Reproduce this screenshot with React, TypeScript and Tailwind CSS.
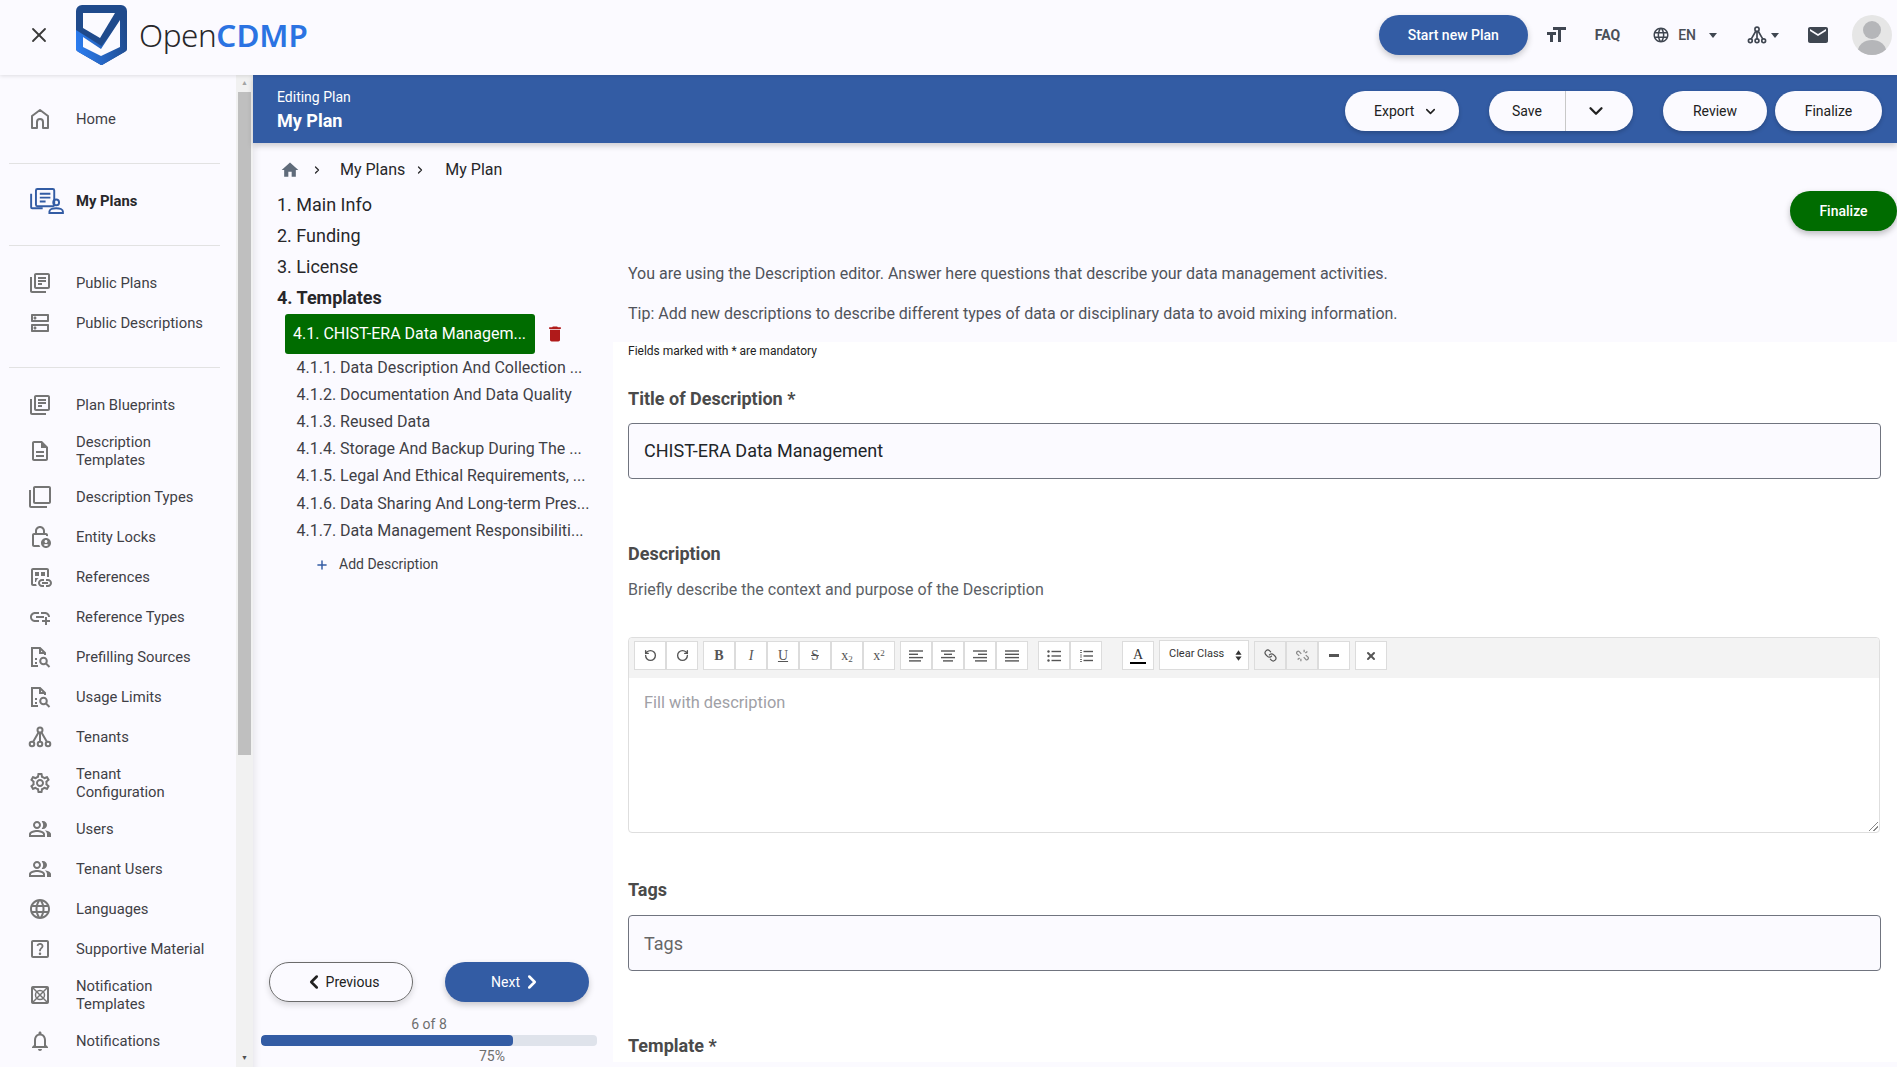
import { ChevronDown, ChevronLeft, ChevronRight, Link, Plus, RotateCcw, RotateCw, X } from 'lucide-react'
import {
  MdDelete,
  MdEmail,
  MdFormatSize,
  MdHome,
  MdLanguage,
  MdOutlineAddLink,
  MdOutlineDatasetLinked,
  MdOutlineDescription,
  MdOutlineDns,
  MdOutlineFilterNone,
  MdOutlineHelpCenter,
  MdOutlineLanguage,
  MdOutlineLibraryBooks,
  MdOutlineLockPerson,
  MdOutlineNotifications,
  MdOutlinePeopleAlt,
  MdOutlineSettings,
} from 'react-icons/md'
import type { ReactNode } from 'react'

const icon = 'w-[24px] h-[24px] text-[#757575] shrink-0'

function TenantsIcon({ className }: { className: string }) {
  return (
    <svg viewBox="0 0 24 24" className={className} fill="none" stroke="currentColor" strokeWidth="2">
      <circle cx="12" cy="5" r="2.500" />
      <circle cx="4" cy="19" r="2.300" />
      <circle cx="12" cy="19" r="2.300" />
      <circle cx="20" cy="19" r="2.300" />
      <path d="M12 8v9M10.500 7.500 5 17M13.500 7.500 19 17" />
    </svg>
  )
}

function DocSearch() {
  return (
    <svg viewBox="0 0 24 24" className={icon} fill="none" stroke="currentColor" strokeWidth="2">
      <path d="M10 21H4V3h8l5 5v2" />
      <path d="M12 3v5h5M7 14h2M7 18h2" />
      <circle cx="15.500" cy="16" r="3.300" />
      <path d="m18 18.500 3.500 3.500" />
    </svg>
  )
}

type NavItem = { label: ReactNode; icon: ReactNode; tall?: boolean }

const adminItems: NavItem[] = [
  { label: 'Plan Blueprints', icon: <MdOutlineLibraryBooks className={icon} /> },
  { label: <>Description<br />Templates</>, tall: true, icon: <MdOutlineDescription className={icon} /> },
  { label: 'Description Types', icon: <MdOutlineFilterNone className={icon} /> },
  { label: 'Entity Locks', icon: <MdOutlineLockPerson className={icon} /> },
  { label: 'References', icon: <MdOutlineDatasetLinked className={icon} /> },
  { label: 'Reference Types', icon: <MdOutlineAddLink className={icon} /> },
  { label: 'Prefilling Sources', icon: <DocSearch /> },
  { label: 'Usage Limits', icon: <DocSearch /> },
  { label: 'Tenants', icon: <TenantsIcon className={icon} /> },
  { label: <>Tenant<br />Configuration</>, tall: true, icon: <MdOutlineSettings className={icon} /> },
  { label: 'Users', icon: <MdOutlinePeopleAlt className={icon} /> },
  { label: 'Tenant Users', icon: <MdOutlinePeopleAlt className={icon} /> },
  { label: 'Languages', icon: <MdOutlineLanguage className={icon} /> },
  { label: 'Supportive Material', icon: <MdOutlineHelpCenter className={icon} /> },
  {
    label: <>Notification<br />Templates</>,
    tall: true,
    icon: (
      <svg viewBox="0 0 24 24" className={icon} fill="none" stroke="currentColor" strokeWidth="2">
        <rect x="4" y="4" width="16" height="16" rx="1" />
        <circle cx="12" cy="12" r="4.500" strokeWidth="1.500" />
        <path d="m4 4 16 16M20 4 4 20" strokeWidth="1.500" />
      </svg>
    ),
  },
  { label: 'Notifications', icon: <MdOutlineNotifications className={icon} /> },
]

function NavRow({ item }: { item: NavItem }) {
  return (
    <div className={`flex items-center pl-[28px] ${item.tall ? 'h-[52px]' : 'h-[40px]'}`}>
      {item.icon}
      <span className="ml-[24px] text-[14.800px] leading-[18px] text-[#3f3f46]">{item.label}</span>
    </div>
  )
}

function Divider() {
  return <div className="h-px bg-[#e2e2e2] ml-[9px] mr-[16px]" />
}

function Sidebar() {
  return (
    <aside className="w-[253px] shrink-0 flex h-[992px] overflow-hidden">
      <div className="w-[236px] shrink-0">
        <div className="h-[88px] flex items-center pl-[28px]">
          <svg viewBox="0 0 24 24" className={icon} fill="none" stroke="currentColor" strokeWidth="2" strokeLinejoin="round">
            <path d="M12 3 4 9v12h5v-6a3 3 0 0 1 6 0v6h5V9z" />
          </svg>
          <span className="ml-[24px] text-[14.800px] text-[#3f3f46]">Home</span>
        </div>
        <Divider />
        <div className="h-[81px] pb-[7px] flex items-center pl-[30px]">
          <svg viewBox="0 0 36 27" className="w-[35px] h-[26px] text-[#335ca4] shrink-0" fill="none" stroke="currentColor" strokeWidth="2">
            <rect x="6" y="1" width="19" height="18" rx="1.500" />
            <path d="M1 6v14a1 1 0 0 0 1 1h11M10 6h11M10 10h11M10 14h6" />
            <circle cx="27" cy="15" r="3" />
            <path d="M20 26v-1.500c0-2 3-3.500 7-3.500s7 1.500 7 3.500V26Z" />
          </svg>
          <span className="ml-[11px] text-[14.800px] font-bold text-[#27272a]">My Plans</span>
        </div>
        <Divider />
        <div className="h-[121px] pt-[17px]">
          <NavRow item={{ label: 'Public Plans', icon: <MdOutlineLibraryBooks className={icon} /> }} />
          <NavRow item={{ label: 'Public Descriptions', icon: <MdOutlineDns className={icon} /> }} />
        </div>
        <Divider />
        <div className="pt-[17px]">
          {adminItems.map((item, i) => (
            <NavRow key={i} item={item} />
          ))}
        </div>
      </div>
      <div className="w-[17px] bg-[#f1f1f1] flex flex-col items-center relative">
        <div className="text-[#a3a3a3] text-[7px] leading-[17px] h-[17px]">▲</div>
        <div className="w-[13px] h-[663px] bg-[#bfbfbf]" />
        <div className="absolute bottom-0 text-[#505050] text-[7px] leading-[17px]">▼</div>
      </div>
    </aside>
  )
}

function Logo() {
  return (
    <svg viewBox="0 0 51 60" className="w-[51px] h-[60px] ml-[30px] shrink-0">
      <defs>
        <linearGradient id="lg" x1="0" y1="0.6" x2="1" y2="0.4">
          <stop offset="0" stopColor="#2b7cf0" />
          <stop offset="1" stopColor="#1f4a8c" />
        </linearGradient>
      </defs>
      <path d="M6 0h39a6 6 0 0 1 6 6v37a4 4 0 0 1-2.500 4L26 60a2 2 0 0 1-1 0L2.500 47A4 4 0 0 1 0 43V6a6 6 0 0 1 6-6Z" fill="#1f4a8c" />
      <path d="M0 25 25.500 41 51 8v35a4 4 0 0 1-2.500 4L26 60a2 2 0 0 1-1 0L2.500 47A4 4 0 0 1 0 43Z" fill="url(#lg)" />
      <path d="M7 8h32L24 33 7 23Z" fill="#fbfaff" />
      <path d="M7 32 25 44 44 15v27L25 51 7 42Z" fill="#fbfaff" />
    </svg>
  )
}

function Caret({ className }: { className: string }) {
  return <span className={`w-0 h-0 border-x-[4px] border-x-transparent border-t-[5px] border-t-[#3f4651] ${className}`} />
}

function Header() {
  return (
    <header className="h-[75px] pb-[5px] flex items-center shadow-[0_1px_4px_rgba(0,0,0,0.12)] relative z-10 bg-[#fbfaff]">
      <X className="w-[24px] h-[24px] ml-[27px] text-[#3a3a3a] shrink-0" strokeWidth={1.800} />
      <div className="ml-[-5px] flex items-center">
        <Logo />
        <span className="ml-[12px] text-[31.400px] font-['Noto_Sans',sans-serif] text-[#27272a] font-light tracking-[-0.400px]">
          Open<span className="text-[#2b73e2] font-semibold tracking-[0px]">CDMP</span>
        </span>
      </div>
      <div className="ml-auto flex items-center">
        <button className="w-[149px] h-[40px] rounded-full bg-[#335ca4] text-white text-[14px] font-medium shadow-[0_3px_6px_rgba(0,0,0,0.2)]">Start new Plan</button>
        <MdFormatSize className="ml-[16px] w-[24px] h-[24px] text-[#3f4651]" />
        <span className="ml-[27px] text-[14px] font-bold text-[#4a4f57]">FAQ</span>
        <MdLanguage className="ml-[32px] w-[18px] h-[18px] text-[#3f4651]" />
        <span className="ml-[8px] text-[14px] font-medium text-[#4a4f57]">EN</span>
        <Caret className="ml-[13px]" />
        <TenantsIcon className="ml-[30px] w-[20px] h-[20px] text-[#3f4651]" />
        <Caret className="ml-[4px]" />
        <MdEmail className="ml-[27px] w-[24px] h-[24px] text-[#3f4651]" />
        <svg viewBox="0 0 40 40" className="ml-[22px] mr-[5px] w-[40px] h-[40px]">
          <defs><clipPath id="av"><circle cx="20" cy="20" r="20" /></clipPath></defs>
          <g clipPath="url(#av)">
            <rect width="40" height="40" fill="#e6e6e6" />
            <circle cx="20" cy="15" r="9" fill="#b5b6b9" />
            <ellipse cx="20" cy="36" rx="14" ry="11" fill="#b5b6b9" />
          </g>
        </svg>
      </div>
    </header>
  )
}

function PillButton({ children, className }: { children: ReactNode; className: string }) {
  return (
    <button className={`h-[40px] rounded-full bg-[#fbfaff] text-[14px] text-[#212121] flex items-center shadow-[0_2px_4px_rgba(0,0,0,0.2)] ${className}`}>
      {children}
    </button>
  )
}

function TitleBar() {
  return (
    <div className="h-[68px] pt-[4px] bg-[#335ca4] flex items-center pl-[24px] shadow-[0_3px_6px_rgba(0,0,0,0.18)] relative z-[5]">
      <div className="pt-[2px]">
        <div className="text-[14px] leading-[18px] text-white">Editing Plan</div>
        <div className="text-[18px] leading-[30px] font-bold text-white">My Plan</div>
      </div>
      <div className="ml-auto flex items-center mr-[15px]">
        <PillButton className="w-[114px] pl-[29px] gap-[9px]">Export <ChevronDown className="w-[15px] h-[15px]" strokeWidth={2.500} /></PillButton>
        <PillButton className="ml-[30px] w-[144px]">
          <span className="w-[77px] text-center border-r border-[#c8c8c8] leading-[40px]">Save</span>
          <ChevronDown className="ml-[19px] w-[22px] h-[22px]" strokeWidth={2.500} />
        </PillButton>
        <PillButton className="ml-[30px] w-[104px] justify-center">Review</PillButton>
        <PillButton className="ml-[8px] w-[107px] justify-center">Finalize</PillButton>
      </div>
    </div>
  )
}

const sections = [
  '4.1.1. Data Description And Collection ...',
  '4.1.2. Documentation And Data Quality',
  '4.1.3. Reused Data',
  '4.1.4. Storage And Backup During The ...',
  '4.1.5. Legal And Ethical Requirements, ...',
  '4.1.6. Data Sharing And Long-term Pres...',
  '4.1.7. Data Management Responsibiliti...',
]

function Steps() {
  return (
    <div className="w-[360px] shrink-0 h-[924px] flex flex-col shadow-[inset_10px_0_10px_-10px_rgba(0,0,0,0.12)]">
      <div className="flex items-center h-[46px] pl-[27px] pt-[8px] text-[16px] text-[#27272a]">
        <MdHome className="w-[20px] h-[20px] text-[#5f6b7a]" />
        <ChevronRight className="ml-[11px] w-[12px] h-[12px]" strokeWidth={2.500} />
        <span className="ml-[17px]">My Plans</span>
        <ChevronRight className="ml-[9px] w-[12px] h-[12px]" strokeWidth={2.500} />
        <span className="ml-[19px]">My Plan</span>
      </div>
      <div className="pl-[24px] text-[18px] leading-[31px] text-[#27272a]">
        <div>1. Main Info</div>
        <div>2. Funding</div>
        <div>3. License</div>
        <div className="font-bold">4. Templates</div>
      </div>
      <div className="flex items-center mt-[0.500px] pl-[32px]">
        <div className="w-[250px] h-[40px] rounded-[3px] bg-[#006c00] text-white text-[16px] flex items-center pl-[8px]">4.1. CHIST-ERA Data Managem...</div>
        <MdDelete className="ml-[10px] w-[20px] h-[20px] text-[#b01a1a]" />
      </div>
      <div className="pl-[43.500px] text-[16px] leading-[27.200px] text-[#3f3f46] whitespace-nowrap">
        {sections.map(s => (
          <div key={s}>{s}</div>
        ))}
      </div>
      <div className="flex items-center pl-[62px] mt-[12px] h-[18px] text-[14px] text-[#3f3f46]">
        <Plus className="w-[14px] h-[14px] text-[#335ca4]" strokeWidth={2.500} />
        <span className="ml-[10px]">Add Description</span>
      </div>
      <div className="mt-auto pl-[8px] pr-[16px] pb-[2px]">
        <div className="flex pl-[8px]">
          <button className="w-[144px] h-[40px] rounded-full border border-[#6b6b6b] text-[14px] text-[#212121] flex items-center justify-center gap-[1px] shadow-[0_3px_6px_rgba(0,0,0,0.14)]">
            <ChevronLeft className="w-[22px] h-[22px]" strokeWidth={2.800} /> Previous
          </button>
          <button className="ml-[32px] w-[144px] h-[40px] rounded-full bg-[#335ca4] text-[14px] text-white flex items-center justify-center gap-[1px] shadow-[0_3px_6px_rgba(0,0,0,0.2)]">
            Next <ChevronRight className="w-[22px] h-[22px]" strokeWidth={2.800} />
          </button>
        </div>
        <div className="text-center text-[14px] leading-[18px] text-[#6e6e6e] mt-[13px]">6 of 8</div>
        <div className="h-[11px] rounded-[4px] bg-[#dfe3eb] mt-[2px] overflow-hidden">
          <div className="h-full w-[75%] bg-[#335ca4] rounded-[4px]" />
        </div>
        <div className="text-[14px] leading-[18px] text-[#6e6e6e] pl-[218px] mt-[1px]">75%</div>
      </div>
    </div>
  )
}

function ToolBtn({ children, shaded }: { children: ReactNode; shaded?: boolean }) {
  return (
    <div className={`w-[32px] h-[29px] border border-[#dcdcdc] flex items-center justify-center text-[14px] text-[#555] font-['Liberation_Serif',serif] ${shaded ? 'bg-[#f2f2f2]' : 'bg-white'}`}>
      {children}
    </div>
  )
}

function LinesIcon({ rows }: { rows: [number, number][] }) {
  return (
    <svg viewBox="0 0 14 12" className="w-[14px] h-[12px] text-[#555]" stroke="currentColor" strokeWidth="1.400">
      {rows.map(([from, to], i) => (
        <path key={i} d={`M${from} ${1 + i * 3.300}H${to}`} />
      ))}
    </svg>
  )
}

function ListIcon({ ordered }: { ordered?: boolean }) {
  return (
    <svg viewBox="0 0 14 12" className="w-[14px] h-[12px] text-[#555]" stroke="currentColor" strokeWidth="1.400">
      {[1.500, 6, 10.500].map(y => (
        <g key={y}>
          {ordered ? <path d={`M1 ${y - 1}h2M1 ${y + 1}h2`} strokeWidth="0.800" /> : <circle cx="1.500" cy={y} r="1.200" fill="currentColor" stroke="none" />}
          <path d={`M4.500 ${y}H14`} />
        </g>
      ))}
    </svg>
  )
}

function Toolbar() {
  return (
    <div className="h-[40px] bg-[#f3f3f3] rounded-t-[4px] flex items-start pl-[5px] pt-[3px]">
      <div className="flex">
        <ToolBtn><RotateCcw className="w-[13px] h-[13px]" strokeWidth={2.500} /></ToolBtn>
        <ToolBtn><RotateCw className="w-[13px] h-[13px]" strokeWidth={2.500} /></ToolBtn>
      </div>
      <div className="flex ml-[5px]">
        <ToolBtn><span className="font-bold">B</span></ToolBtn>
        <ToolBtn><span className="italic">I</span></ToolBtn>
        <ToolBtn><span className="underline">U</span></ToolBtn>
        <ToolBtn><span className="line-through">S</span></ToolBtn>
        <ToolBtn><span>x<sub className="text-[9px]">2</sub></span></ToolBtn>
        <ToolBtn><span>x<sup className="text-[9px]">2</sup></span></ToolBtn>
      </div>
      <div className="flex ml-[5px]">
        <ToolBtn><LinesIcon rows={[[0, 14], [0, 9], [0, 14], [0, 12]]} /></ToolBtn>
        <ToolBtn><LinesIcon rows={[[0, 14], [3, 11], [0, 14], [2, 12]]} /></ToolBtn>
        <ToolBtn><LinesIcon rows={[[0, 14], [5, 14], [0, 14], [2, 14]]} /></ToolBtn>
        <ToolBtn><LinesIcon rows={[[0, 14], [0, 14], [0, 14], [0, 14]]} /></ToolBtn>
      </div>
      <div className="flex ml-[10px]">
        <ToolBtn><ListIcon /></ToolBtn>
        <ToolBtn><ListIcon ordered /></ToolBtn>
      </div>
      <div className="flex ml-[20px]">
        <ToolBtn><span className="border-b-2 border-black leading-[15px] px-[3px] text-[#333]">A</span></ToolBtn>
      </div>
      <div className="ml-[5px] -mt-[1px] w-[90px] h-[30px] bg-white border border-[#dcdcdc] text-[11px] text-[#333] flex items-center pl-[9px] pb-[2px]">
        Clear Class
        <svg viewBox="0 0 8 14" className="ml-auto mr-[6px] mt-[2px] w-[7px] h-[13px]" fill="#333">
          <path d="M4 1 7.500 6H.5ZM4 13 .5 8h7Z" />
        </svg>
      </div>
      <div className="flex ml-[5px]">
        <ToolBtn shaded><Link className="w-[13px] h-[13px] -scale-x-100" strokeWidth={2.200} /></ToolBtn>
        <ToolBtn shaded>
          <svg viewBox="0 0 16 16" className="w-[13px] h-[13px] text-[#888]" fill="none" stroke="currentColor" strokeWidth="1.500">
            <path d="M6.500 6 4 3.200a2 2 0 0 0-2.800 2.800L4 8.500M9.500 10l2.500 2.800a2 2 0 0 0 2.800-2.800L12 7.500M10 1v3M14 3l-2.500 2M2 13l2.500-2M6 15v-3" />
          </svg>
        </ToolBtn>
        <ToolBtn><span className="w-[10px] h-[2.500px] bg-[#555]" /></ToolBtn>
      </div>
      <div className="flex ml-[5px]">
        <ToolBtn><X className="w-[12px] h-[12px]" strokeWidth={4} /></ToolBtn>
      </div>
    </div>
  )
}

const label = 'text-[18px] leading-[24px] font-bold text-[#4a4a4a]'
const field = 'h-[56px] border border-[#70747f] rounded-[4px] bg-[#fbfaff] flex items-center pl-[15px] text-[18px]'

function Editor() {
  return (
    <div className="flex-1 min-w-0 h-[924px] overflow-hidden">
      <div className="h-[199px] pl-[15px]">
        <div className="flex justify-end pt-[48px]">
          <button className="w-[107px] h-[40px] rounded-full bg-[#006c00] text-white text-[14px] font-medium shadow-[0_3px_6px_rgba(0,0,0,0.25)]">Finalize</button>
        </div>
        <p className="mt-[31px] text-[16px] leading-[24px] text-[#50535a]">You are using the Description editor. Answer here questions that describe your data management activities.</p>
        <p className="mt-[16px] text-[16px] leading-[24px] text-[#50535a]">Tip: Add new descriptions to describe different types of data or disciplinary data to avoid mixing information.</p>
      </div>
      <div className="bg-white h-[720px] pl-[15px] pr-[16px]">
        <p className="text-[12px] leading-[18px] text-[#222]">Fields marked with * are mandatory</p>
        <h2 className={`mt-[27px] ${label}`}>Title of Description *</h2>
        <div className={`mt-[12px] pb-[2px] text-[#212529] ${field}`}>CHIST-ERA Data Management</div>
        <h2 className={`mt-[63px] ${label}`}>Description</h2>
        <p className="mt-[12px] text-[16px] leading-[24px] text-[#5c5f66]">Briefly describe the context and purpose of the Description</p>
        <div className="mt-[35px] border border-[#dedede] rounded-[4px] h-[196px] mr-[1px] relative">
          <Toolbar />
          <div className="pl-[15px] pt-[13px] text-[16.400px] leading-[24px] text-[#a0a0a6]">Fill with description</div>
          <span className="absolute right-[1px] bottom-[1px] w-[9px] h-[9px] bg-[linear-gradient(135deg,transparent_45%,#888_45%,#888_55%,transparent_55%,transparent_70%,#888_70%,#888_80%,transparent_80%)]" />
        </div>
        <h2 className={`mt-[45px] ${label}`}>Tags</h2>
        <div className={`mt-[13px] text-[#666] ${field}`}>Tags</div>
        <h2 className={`mt-[63px] ${label}`}>Template *</h2>
      </div>
    </div>
  )
}

export default function App() {
  return (
    <div className="w-[1897px] h-[1067px] overflow-hidden bg-[#fbfaff] font-['Roboto',sans-serif]">
      <Header />
      <div className="flex">
        <Sidebar />
        <main className="flex-1 min-w-0">
          <TitleBar />
          <div className="flex">
            <Steps />
            <Editor />
          </div>
        </main>
      </div>
    </div>
  )
}
